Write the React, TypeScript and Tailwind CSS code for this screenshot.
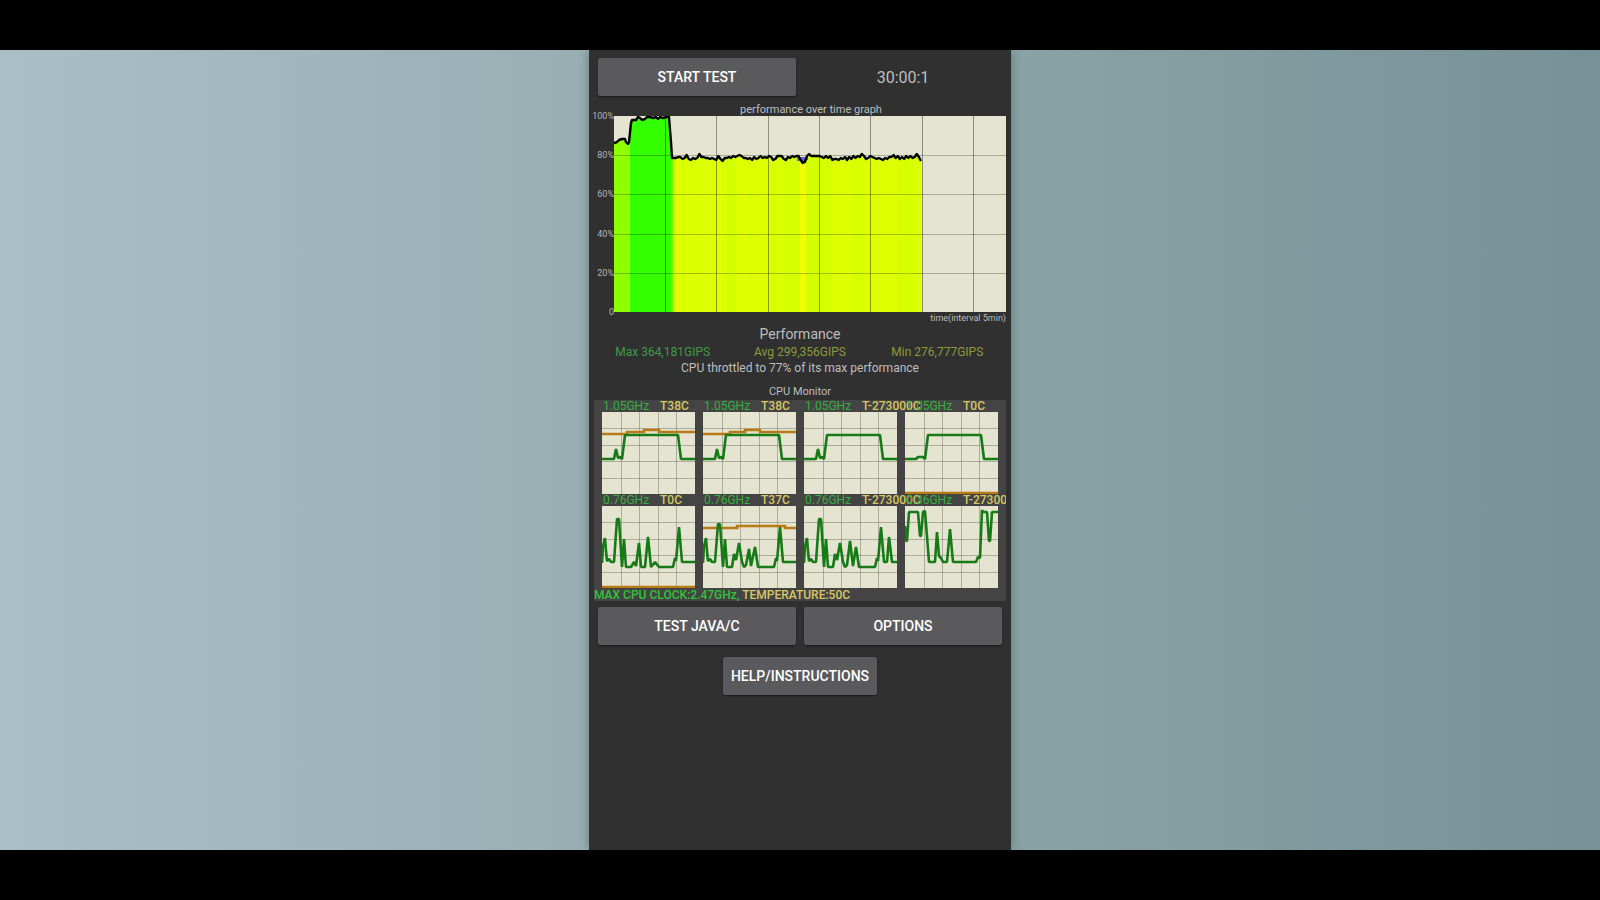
import React from 'react';
import clsx from 'clsx';

type Point = [number, number];

interface Core {
  clock: string;
  temp: string;
  clockLine: string;
  tempLine?: string;
}

const PLATEAU = '0,47 12,47 14,37 16,46 18,45 20,47 23,23 76,23 79,47 93,47';

const cores: Core[] = [
  { clock: '1.05GHz', temp: 'T38C', clockLine: PLATEAU, tempLine: '0,22 25,22 25,20 42,20 42,18 57,18 57,20 93,20' },
  { clock: '1.05GHz', temp: 'T38C', clockLine: PLATEAU, tempLine: '0,22 27,22 27,20 42,20 42,18 57,18 57,20 93,20' },
  { clock: '1.05GHz', temp: 'T-273000C', clockLine: PLATEAU },
  { clock: '1.05GHz', temp: 'T0C', clockLine: '0,47 11,47 13,45 18,45 20,47 23,23 76,23 79,47 93,47', tempLine: '0,81 93,81' },
  {
    clock: '0.76GHz',
    temp: 'T0C',
    clockLine:
      '0,57 1,40 3,32 4,45 5,55 7,53 9,56 12,56 15,13 17,13 20,61 22,33 24,61 29,61 32,56 34,60 37,37 39,61 43,61 46,31 49,61 53,56 57,61 71,61 73,52 74,55 77,21 80,56 93,56',
    tempLine: '0,81 93,81',
  },
  {
    clock: '0.76GHz',
    temp: 'T37C',
    clockLine:
      '0,57 1,40 3,32 4,45 5,55 7,53 9,56 12,56 15,18 17,18 20,61 22,33 24,61 29,61 31,48 33,54 36,37 39,56 41,61 43,59 46,43 48,60 52,41 55,61 71,61 73,52 74,55 77,21 80,56 93,56',
    tempLine: '0,22 34,22 34,20 82,20 82,22 93,22',
  },
  {
    clock: '0.76GHz',
    temp: 'T-273000C',
    clockLine:
      '0,57 1,40 3,32 4,45 5,55 7,53 9,56 12,56 15,13 17,13 20,61 22,33 24,61 29,61 31,48 33,54 36,37 39,56 41,61 43,59 46,35 49,60 52,41 55,61 71,61 73,52 74,55 77,21 80,56 83,56 85,31 88,56 93,56',
  },
  {
    clock: '0.36GHz',
    temp: 'T-273000C',
    clockLine:
      '0,20 1,35 2,35 4,6 13,6 15,30 16,30 18,6 20,5 24,56 30,56 32,26 34,50 36,52 38,56 42,56 45,23 48,56 71,56 73,51 75,52 77,4 78,6 82,6 84,35 85,35 87,6 93,6',
  },
];

// Performance samples, plotted in a 392x196 area
const boost: Point[] = [
  [0, 27], [3, 26], [5, 24], [8, 23], [11, 23], [12, 26], [14, 28], [15, 26], [17, 7], [18, 4], [20, 4],
  [22, 4], [24, 1], [26, 2], [28, 4], [31, 3], [33, 1], [36, 1], [39, 2], [42, 1], [44, 3],
  [46, 1], [49, 2], [52, 1], [55, 1], [57, 26], [58, 42],
];
const steadyLevels = [
  42, 42, 41, 41, 43, 42, 39, 43, 44, 42, 43, 42, 38, 41, 41, 42, 42, 43, 42, 43, 44, 40, 43, 45, 42, 42, 41, 42, 40, 41, 40, 39,
  40, 42, 42, 43, 42, 44, 41, 43, 42, 40, 42, 41, 42, 40, 41, 44, 43, 40, 40, 40, 43, 44, 41, 42, 40, 41, 40, 40,
  44, 47, 46, 40, 38, 40, 40, 40, 40, 40, 41, 42, 40, 42, 40, 44, 43, 43, 44, 42, 43, 41, 44, 41, 43, 40, 42, 40, 41, 38, 40, 43, 42,
  40, 41, 42, 43, 42, 43, 44, 42, 43, 41, 41, 39, 42, 40, 43, 41, 43, 40, 42, 40, 42, 41, 38, 41, 45,
];
const steady: Point[] = steadyLevels.map((y, i) => [60 + (i * 247) / (steadyLevels.length - 1), y]);
const trace = [...boost, ...steady].map((p) => p.join(',')).join(' ');

const percentLabels = ['100%', '80%', '60%', '40%', '20%', '0'];

const toneBands: { x: number; width: number; fill: string }[] = [
  { x: 0, width: 16, fill: '#8fff00' },
  { x: 16, width: 41, fill: '#34ff00' },
  { x: 57, width: 2, fill: '#70ff00' },
  { x: 59, width: 249, fill: '#deff00' },
  { x: 68, width: 4, fill: '#d8ff00' },
  { x: 83, width: 5, fill: '#d8ff00' },
  { x: 112, width: 10, fill: '#d4ff00' },
  { x: 134, width: 5, fill: '#d8ff00' },
  { x: 156, width: 10, fill: '#d8ff00' },
  { x: 170, width: 16, fill: '#d4ff00' },
  { x: 186, width: 6, fill: '#f2ff00' },
  { x: 192, width: 26, fill: '#d4ff00' },
  { x: 238, width: 10, fill: '#d8ff00' },
  { x: 284, width: 18, fill: '#d8ff00' },
];

const PerformanceGraph: React.FC = () => (
  <div className="grid grid-cols-[20px_1fr]">
    <div className="-my-1.5 flex flex-col justify-between text-right text-[9px] leading-3 text-[#b4b4b4]">
      {percentLabels.map((label) => (
        <span key={label} className="-ml-1">{label}</span>
      ))}
    </div>
    <svg viewBox="0 0 392 196" preserveAspectRatio="none" className="block h-[196px] w-full bg-[#e4e4d0]">
      <defs>
        <clipPath id="under-trace">
          <polygon points={`0,196 ${trace} 307,196`} />
        </clipPath>
      </defs>
      <g clipPath="url(#under-trace)">
        {toneBands.map((b) => (
          <rect key={b.x} x={b.x} y="0" width={b.width} height="196" fill={b.fill} />
        ))}
      </g>
      <path d="M183 41 H194 V44 H191 V47 H187 V45 H183 Z" fill="#6464f0" />
      {[39, 78, 118, 157].map((y) => (
        <line key={y} x1="0" x2="392" y1={y + 0.5} y2={y + 0.5} stroke="#000" strokeOpacity="0.25" />
      ))}
      {[51, 102, 154, 205, 256, 308, 359].map((x) => (
        <line key={x} x1={x + 0.5} x2={x + 0.5} y1="0" y2="196" stroke="#000" strokeOpacity="0.38" />
      ))}
      <polyline points={trace} fill="none" stroke="#000" strokeWidth="2.4" strokeLinejoin="round" />
    </svg>
  </div>
);

const CoreGraph: React.FC<{ core: Core }> = ({ core }) => (
  <div className="min-w-0">
    <div className="flex h-3 text-xs leading-3 whitespace-nowrap">
      <span className="w-[58px] shrink-0 pl-px text-[#35b23c]">{core.clock}</span>
      <span className="font-medium text-[#d8c764]">{core.temp}</span>
    </div>
    <svg viewBox="0 0 93 82" preserveAspectRatio="none" className="block h-[82px] w-full bg-[#e4e4d0]">
      {[16, 33, 49, 66].map((y) => (
        <line key={y} x1="0" x2="93" y1={y + 0.5} y2={y + 0.5} stroke="#000" strokeOpacity="0.24" />
      ))}
      {[19, 37, 56, 74].map((x) => (
        <line key={x} x1={x + 0.5} x2={x + 0.5} y1="0" y2="82" stroke="#000" strokeOpacity="0.24" />
      ))}
      {core.tempLine && <polyline points={core.tempLine} fill="none" stroke="#b87a14" strokeWidth="2.6" />}
      <polyline points={core.clockLine} fill="none" stroke="#167a16" strokeWidth="2.6" strokeLinejoin="bevel" />
    </svg>
  </div>
);

const AppButton: React.FC<{ children: React.ReactNode; className?: string }> = ({ children, className }) => (
  <button
    type="button"
    className={clsx('h-[38px] rounded-xs bg-[#5a5a5c] text-sm font-medium text-white shadow-[0_1px_2px_rgba(0,0,0,0.5)]', className)}
  >
    {children}
  </button>
);

export default function App() {
  return (
    <div className="flex min-h-screen flex-col bg-black py-[50px] font-[Roboto,sans-serif]">
      <div className="flex flex-1 justify-center bg-linear-to-r from-[#aabec6] via-[#91a9ad] to-[#769296]">
        <main className="w-[422px] bg-[#303030] px-[5px] text-[#bebebe] shadow-[0_0_10px_rgba(0,0,0,0.3)]">
          <div className="grid grid-cols-2 items-center gap-2 px-1 pt-2">
            <AppButton>START TEST</AppButton>
            <span className="pt-0.5 text-center text-base">30:00:1</span>
          </div>

          <section>
            <h2 className="mt-2 pl-[22px] text-center text-[11px] leading-3">performance over time graph</h2>
            <PerformanceGraph />
            <p className="text-right text-[9px] leading-3">time(interval 5min)</p>
          </section>

          <section className="text-center text-xs leading-4">
            <h2 className="my-0.5 text-sm leading-4">Performance</h2>
            <div className="grid grid-cols-3">
              <span className="text-[#3f9c44]">Max 364,181GIPS</span>
              <span className="text-[#8d9a3c]">Avg 299,356GIPS</span>
              <span className="text-[#8d9a3c]">Min 276,777GIPS</span>
            </div>
            <p>CPU throttled to 77% of its max performance</p>
          </section>

          <section className="mt-2">
            <h2 className="text-center text-[11px] leading-4">CPU Monitor</h2>
            <div className="overflow-hidden bg-[#444]">
              <div className="grid grid-cols-4 gap-x-2 px-2">
                {cores.map((core, i) => (
                  <CoreGraph key={i} core={core} />
                ))}
              </div>
              <p className="pt-px text-xs leading-3 font-medium">
                <span className="text-[#2fc437]">MAX CPU CLOCK:2.47GHz,</span>{' '}
                <span className="text-[#d8c764]">TEMPERATURE:50C</span>
              </p>
            </div>
          </section>

          <div className="mt-1.5 grid grid-cols-2 gap-2 px-1">
            <AppButton>TEST JAVA/C</AppButton>
            <AppButton>OPTIONS</AppButton>
          </div>
          <div className="mt-3 flex justify-center">
            <AppButton className="px-2">HELP/INSTRUCTIONS</AppButton>
          </div>
        </main>
      </div>
    </div>
  );
}
